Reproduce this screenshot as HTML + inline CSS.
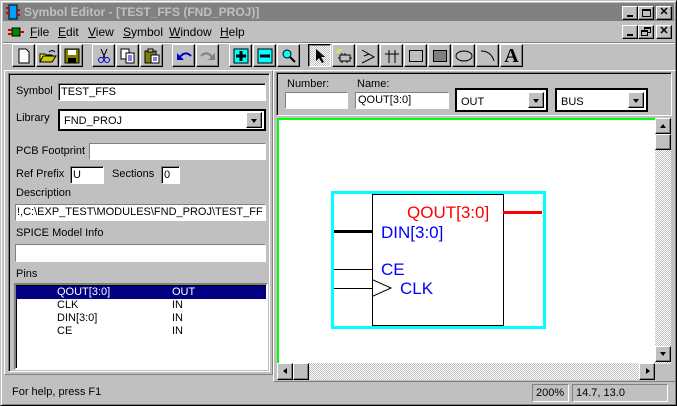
<!DOCTYPE html>
<html><head><meta charset="utf-8"><style>
*{margin:0;padding:0;box-sizing:border-box}
body{width:677px;height:406px;background:#c0c0c0;font-family:"Liberation Sans",Arial,sans-serif;font-size:11px;position:relative;overflow:hidden}
.a{position:absolute}
.raised{border:1px solid;border-color:#fff #000 #000 #fff;box-shadow:inset -1px -1px 0 #808080}
.sunk{border:1px solid;border-color:#808080 #fff #fff #808080;box-shadow:inset 1px 1px 0 #000}
.thin{border:1px solid;border-color:#808080 #fff #fff #808080}
.in{background:#fff;padding-left:2px;line-height:14px;font-size:11px}
.btn{position:absolute;top:44px;width:23px;height:23px;border:1px solid;border-color:#fff #000 #000 #fff;box-shadow:inset -1px -1px 0 #808080;display:flex;align-items:center;justify-content:center}
.lbl{position:absolute;font-size:11px}
.dd{position:absolute;width:16px;height:16px;background:#c0c0c0;border:1px solid;border-color:#fff #000 #000 #fff;box-shadow:inset -1px -1px 0 #808080}
.dd:after{content:"";position:absolute;left:4px;top:6px;border:3px solid transparent;border-top:4px solid #000;border-bottom:0;width:0}
.sym{position:absolute;font-size:17px;line-height:17px}
</style></head><body>
<div class="a" style="left:0;top:0;width:677px;height:406px;border:1px solid;border-color:#c0c0c0 #000 #000 #c0c0c0;box-shadow:inset 1px 1px 0 #fff,inset -1px -1px 0 #808080"></div>
<div class="a" style="left:3px;top:3px;width:671px;height:18px;background:#808080"></div>
<svg class="a" style="left:5px;top:4px" width="16" height="16"><rect x="4" y="1" width="8" height="14" fill="#00a0ff" stroke="#000"/><rect x="1" y="3" width="3" height="2" fill="#c00"/><rect x="1" y="8" width="3" height="2" fill="#c00"/><rect x="12" y="5" width="3" height="2" fill="#c00"/><rect x="12" y="10" width="3" height="2" fill="#c00"/></svg>
<div class="a" style="left:24px;top:5px;color:#c0c0c0;font-weight:bold;font-size:12px">Symbol Editor - [TEST_FFS (FND_PROJ)]</div>
<div class="raised a" style="left:622px;top:6px;width:16px;height:14px;background:#c0c0c0"><div class="a" style="left:4px;top:8px;width:6px;height:2px;background:#000"></div></div>
<div class="raised a" style="left:638px;top:6px;width:16px;height:14px;background:#c0c0c0"><div class="a" style="left:3px;top:2px;width:9px;height:8px;border:1px solid #000;border-top-width:2px"></div></div>
<div class="raised a" style="left:656px;top:6px;width:16px;height:14px;background:#c0c0c0;font-size:11px;font-weight:bold;text-align:center;line-height:11px">✕</div>
<svg class="a" style="left:8px;top:25px" width="16" height="14"><rect x="4" y="3" width="8" height="8" fill="#080" stroke="#000"/><rect x="0" y="4" width="4" height="2" fill="#c00"/><rect x="0" y="8" width="4" height="2" fill="#c00"/><rect x="12" y="6" width="4" height="2" fill="#c00"/></svg>
<div class="a" style="left:30px;top:25px;font-size:12px">
<span style="position:absolute;left:0"><u>F</u>ile</span><span style="position:absolute;left:28px"><u>E</u>dit</span><span style="position:absolute;left:58px"><u>V</u>iew</span><span style="position:absolute;left:93px"><u>S</u>ymbol</span><span style="position:absolute;left:139px"><u>W</u>indow</span><span style="position:absolute;left:190px"><u>H</u>elp</span></div>
<div class="raised a" style="left:622px;top:25px;width:16px;height:14px;background:#c0c0c0"><div class="a" style="left:4px;top:8px;width:6px;height:2px;background:#000"></div></div>
<div class="raised a" style="left:638px;top:25px;width:16px;height:14px;background:#c0c0c0"><div class="a" style="left:5px;top:1px;width:7px;height:6px;border:1px solid #000;border-top-width:2px"></div><div class="a" style="left:2px;top:4px;width:7px;height:6px;border:1px solid #000;border-top-width:2px;background:#c0c0c0"></div></div>
<div class="raised a" style="left:656px;top:25px;width:16px;height:14px;background:#c0c0c0;font-size:11px;font-weight:bold;text-align:center;line-height:11px">✕</div>
<div class="a" style="left:3px;top:42px;width:671px;height:2px;border-top:1px solid #808080;border-bottom:1px solid #fff"></div>
<div class="btn" style="left:12px"><svg width="14" height="16"><path d="M2 1h7l3 3v11H2z" fill="#fff" stroke="#000"/></svg></div>
<div class="btn" style="left:36px"><svg width="18" height="16"><path d="M1 6h5l1 1h6v7H1z" fill="#ff0" stroke="#000"/><path d="M1 14l3-6h13l-4 6z" fill="#cc0" stroke="#000"/><path d="M10 4q3-3 6 0" fill="none" stroke="#000"/></svg></div>
<div class="btn" style="left:60px"><svg width="16" height="16"><rect x="1" y="1" width="14" height="14" fill="#808000" stroke="#000"/><rect x="4" y="2" width="8" height="5" fill="#fff"/><rect x="4" y="10" width="8" height="5" fill="#000"/></svg></div>
<div class="btn" style="left:92px"><svg width="14" height="16"><path d="M4 1l4 9M10 1l-4 9" stroke="#000"/><circle cx="4" cy="12" r="2.5" fill="none" stroke="#00c"/><circle cx="10" cy="12" r="2.5" fill="none" stroke="#00c"/></svg></div>
<div class="btn" style="left:116px"><svg width="16" height="16"><rect x="1" y="1" width="8" height="10" fill="#fff" stroke="#000"/><rect x="6" y="5" width="8" height="10" fill="#fff" stroke="#000"/><path d="M8 8h4M8 10h4M8 12h4" stroke="#00c"/></svg></div>
<div class="btn" style="left:140px"><svg width="16" height="16"><rect x="1" y="3" width="11" height="12" fill="#808000" stroke="#000"/><rect x="4" y="1" width="5" height="3" fill="#c0c0c0" stroke="#000"/><rect x="7" y="7" width="8" height="8" fill="#fff" stroke="#000"/><path d="M9 10h4M9 12h4" stroke="#00c"/></svg></div>
<div class="btn" style="left:172px"><svg width="16" height="14"><path d="M3 9q6-8 12-2" fill="none" stroke="#00c" stroke-width="2"/><path d="M1 4v7h7z" fill="#00c"/></svg></div>
<div class="btn" style="left:196px"><svg width="16" height="14"><path d="M13 9q-6-8-12-2" fill="none" stroke="#808080" stroke-width="2"/><path d="M15 4v7h-7z" fill="#808080"/></svg></div>
<div class="btn" style="left:229px"><svg width="16" height="16"><rect x="1" y="1" width="14" height="14" fill="#0ff" stroke="#000"/><path d="M8 3v10M3 8h10" stroke="#000" stroke-width="3"/></svg></div>
<div class="btn" style="left:253px"><svg width="16" height="16"><rect x="1" y="1" width="14" height="14" fill="#0ff" stroke="#000"/><path d="M3 8h10" stroke="#000" stroke-width="3"/></svg></div>
<div class="btn" style="left:277px"><svg width="16" height="16"><circle cx="6" cy="6" r="4" fill="#0ff" stroke="#000"/><path d="M9 9l5 5" stroke="#000" stroke-width="2"/></svg></div>
<div class="btn" style="left:308px;border-color:#000 #fff #fff #000;box-shadow:inset 1px 1px 0 #808080;background:repeating-conic-gradient(#fff 0 25%,#c0c0c0 0 50%) 0 0/2px 2px"><svg width="14" height="16"><path d="M3 1v12l3-3 3 5 2-1-3-5h4z" fill="#000"/></svg></div>
<div class="btn" style="left:332px"><svg width="18" height="16"><path d="M3 1l2 3M1 4h3M6 1v2" stroke="#ff0"/><rect x="5" y="7" width="10" height="6" fill="#c0c0c0" stroke="#000"/><path d="M7 5v2M10 5v2M7 13v2M12 13v2M3 10h2M15 10h2" stroke="#000"/></svg></div>
<div class="btn" style="left:356px"><svg width="16" height="16"><path d="M2 2l12 7-12 6M9 6l-5 2" fill="none" stroke="#000"/></svg></div>
<div class="btn" style="left:380px"><svg width="16" height="16"><path d="M5 2v13M11 2v13M1 6h14" stroke="#000"/></svg></div>
<div class="btn" style="left:404px"><svg width="16" height="16"><rect x="1.5" y="2.5" width="13" height="11" fill="none" stroke="#000"/></svg></div>
<div class="btn" style="left:428px"><svg width="16" height="16"><rect x="1.5" y="2.5" width="13" height="11" fill="#808080" stroke="#000"/></svg></div>
<div class="btn" style="left:452px"><svg width="18" height="16"><ellipse cx="9" cy="8" rx="8" ry="5" fill="none" stroke="#000"/></svg></div>
<div class="btn" style="left:476px"><svg width="16" height="16"><path d="M1 3q10 0 13 10" fill="none" stroke="#000"/></svg></div>
<div class="btn" style="left:500px;font-family:'Liberation Serif',serif;font-size:20px;font-weight:bold;line-height:20px">A</div>
<div class="a" style="left:4px;top:70px;width:269px;height:305px;border:1px solid;border-color:#fff #808080 #808080 #fff"></div>
<div class="a" style="left:8px;top:73px;width:262px;height:299px;border:1px solid;border-color:#808080 #fff #fff #808080;box-shadow:inset 1px 1px 0 #000"></div>
<div class="lbl" style="left:16px;top:85px">Symbol</div>
<div class="sunk in a" style="left:58px;top:83px;width:208px;height:18px;padding-top:1px">TEST_FFS</div>
<div class="lbl" style="left:16px;top:112px">Library</div>
<div class="a" style="left:58px;top:109px;width:208px;height:22px;background:#fff;border:2px solid #000"><span style="position:absolute;left:4px;top:4px">FND_PROJ</span><div class="dd" style="right:2px;top:1px"></div></div>
<div class="lbl" style="left:16px;top:145px">PCB Footprint</div>
<div class="thin in a" style="left:89px;top:143px;width:177px;height:17px"></div>
<div class="lbl" style="left:16px;top:168px">Ref Prefix</div>
<div class="sunk in a" style="left:70px;top:166px;width:34px;height:18px;padding-top:1px">U</div>
<div class="lbl" style="left:112px;top:168px">Sections</div>
<div class="sunk in a" style="left:161px;top:166px;width:19px;height:18px;padding-top:1px">0</div>
<div class="lbl" style="left:16px;top:187px">Description</div>
<div class="thin in a" style="left:15px;top:204px;width:251px;height:17px;padding-left:1px;white-space:nowrap;overflow:hidden">!,C:\EXP_TEST\MODULES\FND_PROJ\TEST_FF</div>
<div class="lbl" style="left:16px;top:227px">SPICE Model Info</div>
<div class="thin in a" style="left:15px;top:244px;width:251px;height:18px"></div>
<div class="lbl" style="left:16px;top:268px">Pins</div>
<div class="a" style="left:14px;top:283px;width:254px;height:87px;background:#fff;border:2px solid;border-color:#808080 #fff #fff #808080;box-shadow:inset 1px 1px 0 #000"></div>
<div class="a" style="left:16px;top:286px;width:250px;height:13px;background:#000080"></div>
<div class="a" style="left:57px;top:286px;line-height:13px;color:#fff">QOUT[3:0]</div><div class="a" style="left:172px;top:286px;line-height:13px;color:#fff">OUT</div>
<div class="a" style="left:57px;top:299px;line-height:13px">CLK</div><div class="a" style="left:172px;top:299px;line-height:13px">IN</div>
<div class="a" style="left:57px;top:312px;line-height:13px">DIN[3:0]</div><div class="a" style="left:172px;top:312px;line-height:13px">IN</div>
<div class="a" style="left:57px;top:325px;line-height:13px">CE</div><div class="a" style="left:172px;top:325px;line-height:13px">IN</div>
<div class="a" style="left:273px;top:70px;width:403px;height:312px;border:1px solid;border-color:#fff #808080 #808080 #fff"></div>
<div class="a" style="left:276px;top:72px;width:396px;height:44px;border:1px solid;border-color:#808080 #fff #fff #808080;box-shadow:inset 1px 1px 0 #000,inset -1px -1px 0 #c0c0c0"></div>
<div class="lbl" style="left:287px;top:78px">Number:</div>
<div class="lbl" style="left:357px;top:78px">Name:</div>
<div class="thin in a" style="left:285px;top:92px;width:63px;height:17px"></div>
<div class="thin in a" style="left:355px;top:92px;width:94px;height:17px">QOUT[3:0]</div>
<div class="a" style="left:455px;top:88px;width:93px;height:24px;background:#fff;border:2px solid #000"><span style="position:absolute;left:4px;top:6px">OUT</span><div class="dd" style="right:2px;top:2px"></div></div>
<div class="a" style="left:555px;top:88px;width:93px;height:24px;background:#fff;border:2px solid #000"><span style="position:absolute;left:4px;top:6px">BUS</span><div class="dd" style="right:2px;top:2px"></div></div>
<div class="a" style="left:277px;top:118px;width:378px;height:246px;background:#fff;border-left:2px solid #00ff00;border-top:2px solid #00ff00"></div>
<div class="a" style="left:655px;top:118px;width:16px;height:246px;background:repeating-conic-gradient(#fff 0 25%,#c0c0c0 0 50%) 0 0/2px 2px"></div>
<div class="raised a" style="left:655px;top:118px;width:16px;height:16px;background:#c0c0c0"><div class="a" style="left:4px;top:5px;border:3px solid transparent;border-bottom:4px solid #000;border-top:0"></div></div>
<div class="raised a" style="left:655px;top:134px;width:16px;height:16px;background:#c0c0c0"></div>
<div class="raised a" style="left:655px;top:346px;width:16px;height:16px;background:#c0c0c0"><div class="a" style="left:4px;top:5px;border:3px solid transparent;border-top:4px solid #000;border-bottom:0"></div></div>
<div class="a" style="left:277px;top:363px;width:378px;height:17px;background:repeating-conic-gradient(#fff 0 25%,#c0c0c0 0 50%) 0 0/2px 2px"></div>
<div class="raised a" style="left:277px;top:363px;width:16px;height:17px;background:#c0c0c0"><div class="a" style="left:5px;top:4px;border:3px solid transparent;border-right:4px solid #000;border-left:0"></div></div>
<div class="raised a" style="left:293px;top:363px;width:16px;height:17px;background:#c0c0c0"></div>
<div class="raised a" style="left:639px;top:363px;width:16px;height:17px;background:#c0c0c0"><div class="a" style="left:6px;top:4px;border:3px solid transparent;border-left:4px solid #000;border-right:0"></div></div>
<div class="a" style="left:331px;top:191px;width:215px;height:138px;border:3px solid #00ffff"></div>
<div class="a" style="left:372px;top:194px;width:132px;height:132px;border:1px solid #000"></div>
<div class="a" style="left:503px;top:211px;width:39px;height:3px;background:#f00"></div>
<div class="a" style="left:334px;top:230px;width:38px;height:3px;background:#000"></div>
<div class="a" style="left:334px;top:269px;width:38px;height:1px;background:#000"></div>
<div class="a" style="left:334px;top:288px;width:38px;height:1px;background:#000"></div>
<svg class="a" style="left:372px;top:279px" width="22" height="20"><path d="M0 0.5L19 9L0 17.5" fill="none" stroke="#000" stroke-width="1"/></svg>
<div class="sym" style="left:407px;top:204px;color:#f00">QOUT[3:0]</div>
<div class="sym" style="left:381px;top:224px;color:#00f">DIN[3:0]</div>
<div class="sym" style="left:381px;top:261px;color:#00f">CE</div>
<div class="sym" style="left:400px;top:280px;color:#00f">CLK</div>
<div class="a" style="left:12px;top:386px;font-size:11px">For help, press F1</div>
<div class="thin a" style="left:532px;top:384px;width:37px;height:18px;padding:2px 3px">200%</div>
<div class="thin a" style="left:572px;top:384px;width:96px;height:18px;padding:2px 3px">14.7, 13.0</div>
</body></html>
